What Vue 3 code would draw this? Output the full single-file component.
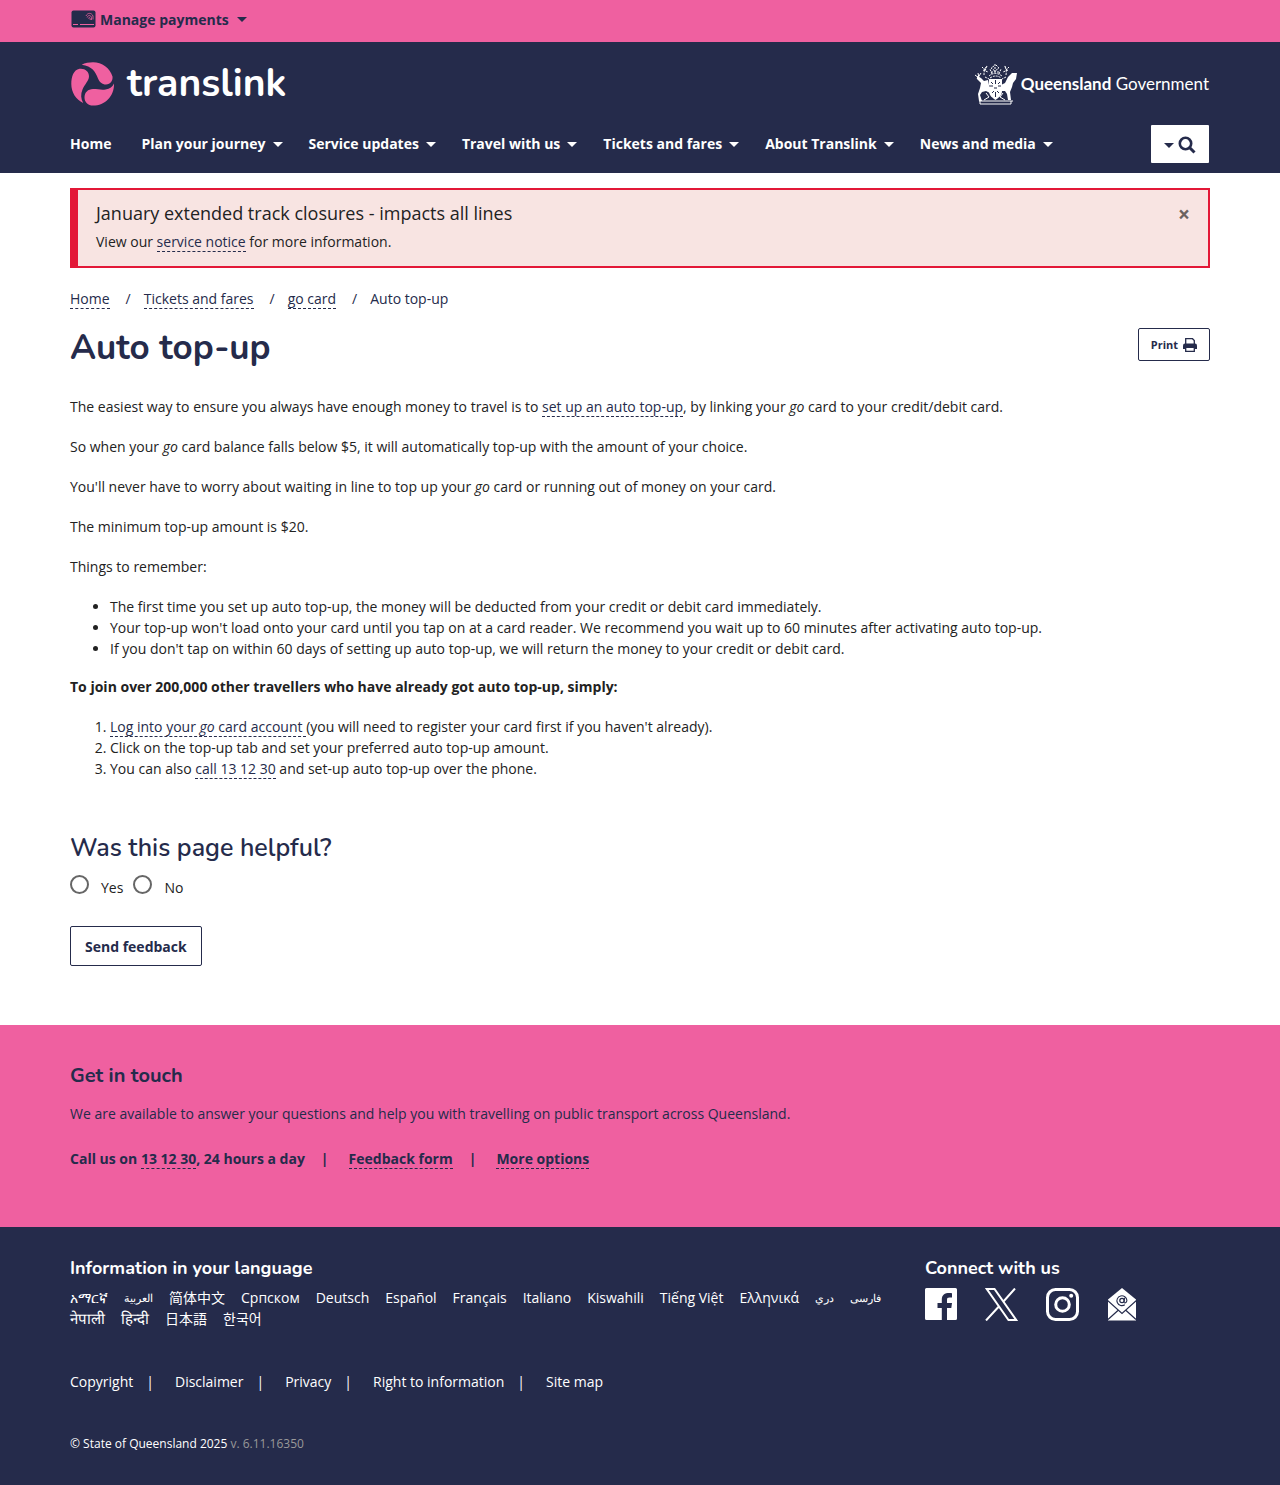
<script setup>
import { ref } from 'vue'

const menu = ['Plan your journey', 'Service updates', 'Travel with us', 'Tickets and fares', 'About Translink', 'News and media']
const languages = [
  ['am', 'አማርኛ'], ['ar', 'العربية'], ['zh-Hans', '简体中文'], ['sr', 'Српском'], ['de', 'Deutsch'],
  ['es', 'Español'], ['fr', 'Français'], ['it', 'Italiano'], ['sw', 'Kiswahili'], ['vi', 'Tiếng Việt'],
  ['el', 'Ελληνικά'], ['prs', 'دري'], ['fa', 'فارسی'], ['ne', 'नेपाली'], ['hi', 'हिन्दी'],
  ['ja', '日本語'], ['ko', '한국어'],
]
const scripts = { ar: 'arabic', prs: 'arabic', fa: 'arabic', ne: 'devanagari', hi: 'devanagari' }
const legal = ['Copyright', 'Disclaimer', 'Privacy', 'Right to information', 'Site map']
const helpful = ref('')
const showAlert = ref(true)
</script>

<template>
  <div class="page">
    <div class="topbar">
      <div class="container">
        <button class="payments" type="button">
          <svg width="25" height="18" viewBox="0 0 25 18" aria-hidden="true">
            <rect x="0.5" y="0.5" width="24" height="17" rx="2" fill="#252b4b" />
            <path d="M2 14.5h5M9 14.5h14" stroke="#ef60a0" stroke-width="1" />
            <path d="M15 6c1.500-3.500 5.500-3.500 7 0v3.500M16.200 7.500c1-3 3.600-2.500 4.300 0v2.500M17.500 8.500c.6-1.800 1.600-1.200 1.800 1.500" fill="none" stroke="#ef60a0" stroke-width=".8" />
          </svg>
          <span>Manage payments</span>
          <i class="caret"></i>
        </button>
      </div>
    </div>

    <header class="header">
      <div class="container">
        <div class="brand-row">
          <a class="brand" href="#" aria-label="translink">
            <svg width="44" height="44" viewBox="0 0 44 44" fill="#ef60a0" aria-hidden="true">
              <path d="M10.700 2.800C14 1 18 .3 22 .3C31 .3 39 6 41.500 14.500C42 18.500 39.500 22.500 35 22.500C31 22.500 28.500 20 27 16.500C24.500 10 21 4 10.700 2.800Z" />
              <path d="M8.500 6.800C13.500 6 18.300 9.500 18 14.500C17.800 19 13.500 22.500 11.500 27.500C9.500 32 9.800 37 12.200 41C5 37.500.3 30.500.3 22C.3 15 2.500 7.800 8.500 6.800Z" />
              <path d="M43 21.500C43.500 34 34 43.600 22 43.600C17 43.600 13.500 40 13.500 35.500C13.500 30.500 17 27 22 27C27 27 30 28.200 34.500 27.500C39 26.800 41.500 25 43 21.500Z" />
            </svg>
            <span>translink</span>
          </a>
          <a class="gov" href="#" aria-label="Queensland Government">
            <svg width="44" height="42" viewBox="0 0 44 42" fill="#fff" stroke="#fff" aria-hidden="true">
              <path d="M15 16h13v12c0 5-4 7-6.500 9C19 35 15 33 15 28Z" stroke="none" />
              <path d="M21.500 17v4M21.500 29v5M15 23h4M24 23h4M17 19l2 2M26 19l-2 2M18 30l2-2M25 30l-2-2M20 25h3" stroke="#252b4b" stroke-width="1" />
              <path d="M3 13l4 2 3 3 4-1 1 5 1 8-4-2-4 1-2 3 2 6H5l-1-7 2-6 1-5-4-4ZM43 10l-5 0-4 4-3 6-4 2 0 6 4 0 2 3 1 6h3l-1-8 2-5 1-4 3-4Z" stroke="none" />
              <path d="M1 12l4 3-1-5M3 16l4-6M5 38h34M6 41h31M6 38v3M37 38v3M12 30l3 4-5 3M29 30l-3 4 5 3" fill="none" />
              <path d="M15 13q6-5 13 0M16 15q6-4 11 0M10 12q0-7 3-9M9 7l5 2M8 4l3 3M13 3l-2 5M32 12q1-7-2-9M34 7l-5 2M35 4l-3 3M31 3l2 5M18 11l-2-5M25 11l2-5M20 3l-3 2 4 3M21 1v9M22 2l3 3-4 3M17 9h8M11 14l4 2M32 14l-4 2" fill="none" stroke-dasharray="2 1" />
            </svg>
            <span><b>Queensland</b> Government</span>
          </a>
        </div>
        <div class="nav-row">
          <nav class="nav" aria-label="Main">
            <a class="nav-link" href="#">Home</a>
            <a v-for="item in menu" :key="item" class="nav-link" href="#">{{ item }}<i class="caret"></i></a>
          </nav>
          <button class="search" type="button" aria-label="Search">
            <i class="caret"></i>
            <svg width="18" height="18" viewBox="0 0 18 18" fill="none" stroke="#252b4b" aria-hidden="true">
              <circle cx="7.500" cy="7.500" r="5.700" stroke-width="2.600" />
              <path d="M12 12l4.500 4.500" stroke-width="3" />
            </svg>
          </button>
        </div>
      </div>
    </header>

    <main class="container main">
      <section v-if="showAlert" class="alert">
        <div>
          <h2>January extended track closures - impacts all lines</h2>
          <p>View our <a class="link" href="#">service notice</a> for more information.</p>
        </div>
        <button class="close" type="button" aria-label="Close" @click="showAlert = false">×</button>
      </section>

      <nav aria-label="Breadcrumb">
        <ol class="crumbs">
          <li><a class="link" href="#">Home</a></li>
          <li><a class="link" href="#">Tickets and fares</a></li>
          <li><a class="link" href="#">go card</a></li>
          <li>Auto top-up</li>
        </ol>
      </nav>

      <div class="title-row">
        <h1>Auto top-up</h1>
        <button class="print" type="button">
          Print
          <svg width="14" height="14" viewBox="0 0 14 14" aria-hidden="true">
            <path d="M2.700 6V.7h6.800L11.300 2.500V6" fill="none" stroke="#252b4b" stroke-width="1.300" />
            <path d="M0 11V7.500Q0 5.500 2 5.500H12Q14 5.500 14 7.500V11Z" fill="#252b4b" />
            <path d="M2.700 9.300h8.600v4H2.700Z" fill="#fff" stroke="#252b4b" stroke-width="1.300" />
          </svg>
        </button>
      </div>

      <article class="content">
        <p>The easiest way to ensure you always have enough money to travel is to <a class="link" href="#">set up an auto top-up</a>, by linking your <em>go</em> card to your credit/debit card.</p>
        <p>So when your <em>go</em> card balance falls below $5, it will automatically top-up with the amount of your choice.</p>
        <p>You'll never have to worry about waiting in line to top up your <em>go</em> card or running out of money on your card.</p>
        <p>The minimum top-up amount is $20.</p>
        <p>Things to remember:</p>
        <ul>
          <li>The first time you set up auto top-up, the money will be deducted from your credit or debit card immediately.</li>
          <li>Your top-up won't load onto your card until you tap on at a card reader. We recommend you wait up to 60 minutes after activating auto top-up.</li>
          <li>If you don't tap on within 60 days of setting up auto top-up, we will return the money to your credit or debit card.</li>
        </ul>
        <p><strong>To join over 200,000 other travellers who have already got auto top-up, simply:</strong></p>
        <ol>
          <li><a class="link" href="#">Log into your <em>go</em> card account </a>(you will need to register your card first if you haven't already).</li>
          <li>Click on the top-up tab and set your preferred auto top-up amount.</li>
          <li>You can also <a class="link" href="#">call 13 12 30</a> and set-up auto top-up over the phone.</li>
        </ol>
      </article>

      <form class="feedback" @submit.prevent>
        <fieldset>
          <legend>Was this page helpful?</legend>
          <div class="options">
            <label><input v-model="helpful" type="radio" name="helpful" value="yes" /><span>Yes</span></label>
            <label><input v-model="helpful" type="radio" name="helpful" value="no" /><span>No</span></label>
          </div>
        </fieldset>
        <button class="send" type="submit">Send feedback</button>
      </form>
    </main>

    <section class="touch">
      <div class="container">
        <h2>Get in touch</h2>
        <p>We are available to answer your questions and help you with travelling on public transport across Queensland.</p>
        <ul class="piped strong">
          <li>Call us on <a class="link" href="#">13 12 30</a>, 24 hours a day</li>
          <li><a class="link" href="#">Feedback form</a></li>
          <li><a class="link" href="#">More options</a></li>
        </ul>
      </div>
    </section>

    <footer class="footer">
      <div class="container">
        <div class="footer-cols">
          <section class="langs">
            <h2>Information in your language</h2>
            <ul>
              <li v-for="[code, name] in languages" :key="code">
                <a href="#" :lang="code" :class="scripts[code]">{{ name }}</a>
              </li>
            </ul>
          </section>
          <section class="connect">
            <h2>Connect with us</h2>
            <div class="social">
              <a href="#" aria-label="Facebook">
                <svg width="32" height="33" viewBox="0 0 32 33">
                  <path d="M1.500 0h29A1.500 1.500 0 0 1 32 1.500v29a1.500 1.500 0 0 1-1.500 1.500H22V20h4.300l.7-5H22v-3c0-1.600.5-2.400 2.500-2.400H27V5.200c-6-.8-10.200.8-10.200 6.300V15H12.500v5h4.300v12H1.500A1.500 1.500 0 0 1 0 30.500v-29A1.500 1.500 0 0 1 1.500 0Z" fill="#fff" />
                </svg>
              </a>
              <a href="#" aria-label="X">
                <svg width="33" height="33" viewBox="0 0 33 33" fill="none" stroke="#fff" stroke-width="2">
                  <path d="M1.800 1H9.500L31.200 32H23.500ZM1 32.500L14.300 18M18 14L30 .5" />
                </svg>
              </a>
              <a href="#" aria-label="Instagram">
                <svg width="33" height="33" viewBox="0 0 33 33" fill="none" stroke="#fff" stroke-width="3">
                  <rect x="1.500" y="1.500" width="30" height="30" rx="8" />
                  <circle cx="16.500" cy="16.500" r="6.800" />
                  <circle cx="25.200" cy="7.800" r="2" fill="#fff" stroke="none" />
                </svg>
              </a>
              <a href="#" aria-label="Email newsletter">
                <svg width="30" height="33" viewBox="0 0 30 33">
                  <path d="M15 0L29 11.500V32.500H1V11.500Z" fill="#fff" />
                  <path d="M0 12L15 25.500L30 12M1 31.500L11.500 22M29 31.500L18.500 22" fill="none" stroke="#252b4b" stroke-width="1.200" />
                  <circle cx="15" cy="12.500" r="2.200" fill="none" stroke="#252b4b" stroke-width="1.200" />
                  <path d="M17.500 9.800l-.6 4.200c.1 1.800 3 1 3-1.700A5 4.900 0 1 0 17.800 16.700" fill="none" stroke="#252b4b" stroke-width="1.100" />
                </svg>
              </a>
            </div>
          </section>
        </div>
        <ul class="piped legal">
          <li v-for="item in legal" :key="item"><a href="#">{{ item }}</a></li>
        </ul>
        <p class="copy"><a href="#">© State of Queensland 2025</a> <span>v. 6.11.16350</span></p>
      </div>
    </footer>
  </div>
</template>

<style>
body {
  margin: 0;
}
</style>

<style scoped>
.page {
  font-family: "Open Sans", "Noto Sans CJK SC", sans-serif;
  font-size: 14px;
  line-height: 21px;
  color: #222;
  background: #fff;
}
.page *,
.page *::before {
  box-sizing: border-box;
}
h1, h2, p, ul, ol, fieldset {
  margin: 0;
  padding: 0;
}
button {
  font: inherit;
  color: #252b4b;
  cursor: pointer;
}
a {
  color: inherit;
  text-decoration: none;
}
.container {
  max-width: 1140px;
  margin: 0 auto;
}
.link {
  color: #252b4b;
  border-bottom: 1px dashed #252b4b;
}
.caret {
  display: inline-block;
  border: 5px solid transparent;
  border-top-color: currentColor;
  border-bottom: 0;
}

.topbar {
  background: #ef60a0;
}
.payments {
  display: flex;
  align-items: center;
  height: 42px;
  padding: 0 0 4px 1px;
  border: 0;
  background: none;
  font-weight: 700;
}
.payments span {
  margin: 0 8px 0 4px;
}

.header {
  background: #252b4b;
  color: #fff;
  padding: 20px 0 10px;
}
.brand-row, .nav-row, .title-row, .brand, .gov {
  display: flex;
  align-items: center;
}
.brand-row, .nav-row, .title-row {
  justify-content: space-between;
}
.brand {
  gap: 12px;
  padding-left: 1px;
  font: 700 39px/44px "Nunito", "Open Sans", sans-serif;
}
.gov {
  gap: 3px;
  padding-right: 1px;
  font: 400 17px/42px "Lato", "Open Sans", sans-serif;
}
.nav-row {
  margin-top: 19px;
}
.nav {
  display: flex;
  gap: 26px;
  padding-bottom: 2px;
  font-weight: 700;
}
.nav-link:first-child {
  margin-right: 4px;
}
.nav .caret {
  margin: 0 0 2px 7px;
}
.search {
  display: flex;
  align-items: center;
  justify-content: center;
  gap: 4px;
  width: 58px;
  height: 38px;
  margin-right: 1px;
  padding: 2px 0 0;
  border: 0;
  border-radius: 1px;
  background: #fff;
}

.main {
  padding: 15px 0 59px;
}
.alert {
  display: flex;
  justify-content: space-between;
  align-items: flex-start;
  padding: 10px 18px 14px;
  border: 2px solid #e31837;
  border-left-width: 8px;
  background: #f8e4e2;
}
.alert h2 {
  font-size: 18px;
  line-height: 26px;
  font-weight: 400;
  margin-bottom: 5px;
}
.close {
  padding: 0;
  border: 0;
  background: none;
  font-size: 21px;
  line-height: 28px;
  font-weight: 700;
  color: #6b6160;
}
.crumbs {
  display: flex;
  list-style: none;
  margin-top: 20px;
  color: #252b4b;
}
.crumbs li + li::before {
  content: "/";
  margin: 0 13px 0 16px;
}
.title-row {
  margin-top: 19px;
  align-items: flex-start;
}
h1, legend, .touch h2, .footer h2 {
  font-family: "Nunito", "Open Sans", sans-serif;
  color: #252b4b;
}
h1 {
  font-size: 35px;
  line-height: 40px;
  font-weight: 700;
}
.print {
  display: flex;
  align-items: center;
  gap: 5px;
  height: 33px;
  padding: 0 12px;
  border: 1px solid #252b4b;
  border-radius: 2px;
  background: #fff;
  font-size: 11px;
  font-weight: 700;
}
.content {
  margin-top: 28px;
}
.content p {
  margin-bottom: 19px;
}
.content ul, .content ol {
  margin-bottom: 17px;
  padding-left: 40px;
}
.feedback {
  margin-top: 51px;
}
fieldset {
  border: 0;
}
legend {
  padding: 0;
  font-size: 25px;
  line-height: 36px;
  font-weight: 600;
}
.options {
  display: flex;
  gap: 10px;
  margin-top: 9px;
}
.options label {
  display: flex;
  gap: 12px;
}
.options span {
  padding-top: 2px;
}
.options input {
  appearance: none;
  width: 19px;
  height: 19px;
  margin: 0;
  border: 2px solid #666;
  border-radius: 50%;
  background: #fff;
}
.options input:checked {
  background: #252b4b;
  box-shadow: inset 0 0 0 3px #fff;
}
.send {
  margin-top: 28px;
  height: 40px;
  padding: 0 14px;
  border: 1px solid #252b4b;
  border-radius: 2px;
  background: #fff;
  font-weight: 700;
}

.touch {
  padding: 36px 0 58px;
  background: #ef60a0;
  color: #252b4b;
}
.touch h2 {
  font-size: 20px;
  line-height: 30px;
  font-weight: 700;
}
.touch p {
  margin: 12px 0 24px;
}
.piped {
  display: flex;
  flex-wrap: wrap;
  list-style: none;
}
.piped li + li::before {
  content: "|";
  margin: 0 20px 0 16px;
}
.strong {
  font-weight: 700;
}

.footer {
  padding: 28px 0 31px;
  background: #252b4b;
  color: #fff;
}
.footer-cols {
  display: flex;
}
.footer h2 {
  font-size: 18px;
  line-height: 26px;
  font-weight: 700;
  color: #fff;
}
.langs {
  width: 75%;
  padding-right: 30px;
}
.langs ul {
  display: flex;
  flex-wrap: wrap;
  column-gap: 16px;
  margin-top: 6px;
  list-style: none;
}
.langs a {
  display: block;
}
.langs .arabic {
  font-size: 11px;
}
.langs .devanagari {
  font-size: 15px;
}
.social {
  display: flex;
  gap: 28px;
  margin-top: 7px;
}
.social svg {
  display: block;
}
.legal {
  margin-top: 42px;
}
.legal li + li::before {
  margin: 0 21px 0 13px;
}
.copy {
  margin-top: 42px;
  font-size: 12px;
  line-height: 20px;
}
.copy span {
  color: #999;
}
</style>
